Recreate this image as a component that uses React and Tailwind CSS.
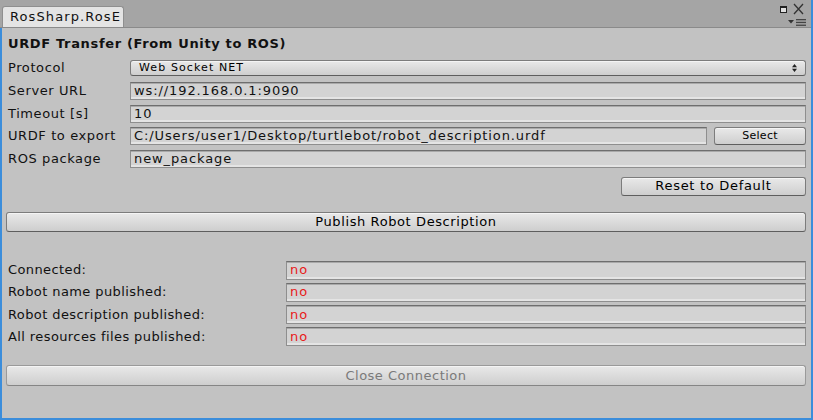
import React from 'react';

const Field = ({ children, className = '' }) => (
  <div
    className={`flex items-center h-[18px] pl-[3px] bg-[#d3d3d3] border border-[#8e8e8e] border-t-[#6e6e6e] shadow-[inset_0_1px_0_#a9a9a9,inset_0_-2px_0_#e4e4e4] whitespace-nowrap overflow-hidden ${className}`}
  >
    {children}
  </div>
);

const Button = ({ children, className = '', disabled = false }) => (
  <div
    className={`flex items-center justify-center rounded-[3px] border bg-gradient-to-b from-[#e9e9e9] to-[#cecece] shadow-[inset_0_1px_0_#f4f4f4] ${
      disabled ? 'border-[#9a9a9a] border-b-[#858585] text-[#7a7a7a]' : 'border-[#7c7c7c] border-b-[#5e5e5e] text-black'
    } ${className}`}
  >
    {children}
  </div>
);

const Row = ({ label, children }) => (
  <div className="flex items-center h-[18px]">
    <div className="w-[124px] pl-[2px] shrink-0 whitespace-nowrap">{label}</div>
    <div className="flex-1 flex gap-[7px]">{children}</div>
  </div>
);

const StatusRow = ({ label }) => (
  <div className="flex items-center h-[19px]">
    <div className="w-[280px] pl-[2px] shrink-0 whitespace-nowrap tracking-[0.4px]">{label}</div>
    <Field className="flex-1 h-[19px] text-[#e81a1a] tracking-[0.9px]">no</Field>
  </div>
);

export default function App() {
  return (
    <div className="w-[813px] h-[420px] flex flex-col bg-[#a5a5a5] font-['DejaVu_Sans',sans-serif] text-[13px] leading-[16px] tracking-[0.6px] text-[#111] border-r-2 border-[#3b8ddb] overflow-hidden">
      {/* tab strip */}
      <div className="relative h-[28px] shrink-0 flex items-end pl-[2px] border-b border-[#8a8a8a]">
        <div className="h-[21px] w-[122px] flex items-center pl-[7px] bg-[#e4e4e4] border border-b-0 border-[#8f8f8f] rounded-t-[3px] whitespace-nowrap overflow-hidden tracking-[1.1px]">
          RosSharp.RosE
        </div>
        <svg className="absolute left-[780px] top-[6px]" width="7" height="7" viewBox="0 0 7 7">
          <rect x="0.5" y="0.5" width="6" height="6" fill="#e0e0e0" stroke="#222" />
          <rect x="0" y="0" width="7" height="2" fill="#222" />
        </svg>
        <svg className="absolute left-[793px] top-[3px]" width="11" height="12" viewBox="0 0 11 12">
          <path d="M1 1 L10 11 M10 1 L1 11" stroke="#333" strokeWidth="1.3" />
        </svg>
        <svg className="absolute left-[788px] top-[20px]" width="6" height="4" viewBox="0 0 6 4">
          <path d="M0 0 H6 L3 3.5 Z" fill="#333" />
        </svg>
        <svg className="absolute left-[796px] top-[19px]" width="10" height="7" viewBox="0 0 10 7">
          <rect x="0" y="0" width="10" height="1.3" fill="#444" />
          <rect x="0" y="2.8" width="10" height="1.3" fill="#444" />
          <rect x="0" y="5.6" width="10" height="1.3" fill="#444" />
        </svg>
      </div>

      {/* body */}
      <div className="flex-1 flex flex-col bg-[#c2c2c2] border-l-2 border-b-2 border-[#3b8ddb] pl-[4px] pr-[5px]">
        <div className="mt-[7px] h-[18px] leading-[18px] pl-[2px] font-bold whitespace-nowrap tracking-[0.65px]">
          URDF Transfer (From Unity to ROS)
        </div>

        <div className="mt-[7px] flex flex-col gap-[4.5px]">
          <div className="flex items-center h-[16px]">
            <div className="w-[124px] pl-[2px] shrink-0 whitespace-nowrap">Protocol</div>
            <Button className="flex-1 h-[16px] !justify-between pl-[8px] pr-[8px] text-[11px] tracking-[1.1px]">
              <span>Web Socket NET</span>
              <svg width="5" height="8" viewBox="0 0 5 8">
                <path d="M0 3.3 L2.5 0 L5 3.3 Z M0 4.7 L2.5 8 L5 4.7 Z" fill="#222" />
              </svg>
            </Button>
          </div>
          <div className="mt-[1.5px]">
            <Row label="Server URL">
              <Field className="flex-1 tracking-[0.9px]">ws://192.168.0.1:9090</Field>
            </Row>
          </div>
          <Row label="Timeout [s]">
            <Field className="flex-1 tracking-[0.9px]">10</Field>
          </Row>
          <Row label="URDF to export">
            <Field className="flex-1 tracking-[0.9px]">C:/Users/user1/Desktop/turtlebot/robot_description.urdf</Field>
            <Button className="w-[92px] h-[18px] text-[11px] tracking-[0.3px]">Select</Button>
          </Row>
          <Row label="ROS package">
            <Field className="flex-1 tracking-[0.9px]">new_package</Field>
          </Row>
        </div>

        <div className="mt-[9px] flex justify-end">
          <Button className="w-[185px] h-[19px] tracking-[0.7px]">Reset to Default</Button>
        </div>

        <Button className="mt-[16px] h-[20px]">Publish Robot Description</Button>

        <div className="mt-[29px] flex flex-col gap-[3.3px]">
          <StatusRow label="Connected:" />
          <StatusRow label="Robot name published:" />
          <StatusRow label="Robot description published:" />
          <StatusRow label="All resources files published:" />
        </div>

        <Button disabled className="mt-[19px] h-[21px] tracking-[0.5px]">Close Connection</Button>
      </div>
    </div>
  );
}
